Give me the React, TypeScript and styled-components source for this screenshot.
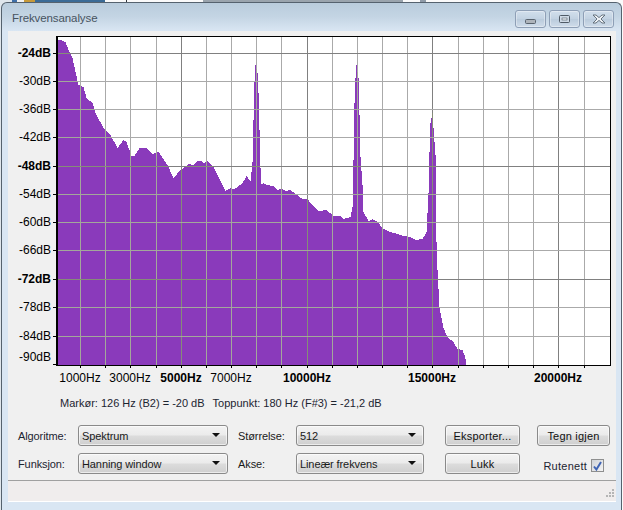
import styled, { createGlobalStyle } from "styled-components";

const GlobalStyle = createGlobalStyle`
  html, body {
    margin: 0;
    padding: 0;
    background: #fff;
  }
`;

// spectrum outline read off the picture, [x, y] in page pixels
const SPECTRUM: [number, number][] = [
  [57, 45], [58, 40], [60, 40], [65, 42], [68, 50], [72, 58], [75, 72], [78, 85], [83, 87],
  [86, 98], [92, 103], [95, 113], [103, 128], [110, 135], [117, 148], [123, 140], [126, 142],
  [131, 156], [134, 156], [139, 148], [146, 148], [152, 154], [158, 152], [167, 165], [173, 178],
  [180, 170], [188, 164], [193, 165], [197, 161], [201, 161], [203, 163], [207, 161], [213, 167],
  [218, 177], [225, 191], [230, 188], [234, 189], [242, 183], [246, 176], [250, 181], [252, 162],
  [253, 120], [254, 82], [255, 65], [257, 73], [258, 93], [259, 130], [260, 168], [261, 184],
  [263, 183], [267, 185], [273, 186], [277, 190], [281, 188], [285, 191], [290, 190], [295, 194],
  [302, 199], [307, 199], [310, 203], [318, 211], [326, 210], [333, 216], [340, 216], [343, 219],
  [350, 217], [352, 207], [353, 160], [354, 103], [355, 78], [356, 65], [358, 78], [359, 115],
  [360, 157], [362, 185], [363, 212], [368, 221], [372, 219], [377, 222], [382, 228], [390, 232],
  [397, 234], [403, 236], [410, 237], [415, 240], [422, 239], [426, 232], [428, 193], [429, 152],
  [430, 123], [432, 113], [433, 128], [435, 155], [436, 242], [437, 270], [439, 307], [441, 318],
  [443, 328], [447, 337], [453, 342], [457, 349], [462, 350], [464, 355], [466, 363],
];

const PLOT = { left: 56, right: 610, top: 36, bottom: 365 };

const V_LINES = [80, 105, 130, 156, 181, 206, 231, 256, 281, 307, 332, 357, 382, 407, 432, 458, 483, 508, 533, 558, 584];
const V_MAJOR = [181, 307, 432, 558];

const DB_ROWS = [
  { y: 53, label: "-24dB", major: true },
  { y: 81, label: "-30dB" },
  { y: 109, label: "-36dB" },
  { y: 137, label: "-42dB" },
  { y: 166, label: "-48dB", major: true },
  { y: 194, label: "-54dB" },
  { y: 222, label: "-60dB" },
  { y: 250, label: "-66dB" },
  { y: 279, label: "-72dB", major: true },
  { y: 307, label: "-78dB" },
  { y: 336, label: "-84dB" },
];

const HZ_LABELS = [
  { x: 80, label: "1000Hz" },
  { x: 130, label: "3000Hz" },
  { x: 181, label: "5000Hz", major: true },
  { x: 231, label: "7000Hz" },
  { x: 307, label: "10000Hz", major: true },
  { x: 432, label: "15000Hz", major: true },
  { x: 558, label: "20000Hz", major: true },
];

function spectrumPath() {
  let d = `M${PLOT.left + 1} ${PLOT.bottom}`;
  for (let i = 0; i < SPECTRUM.length - 1; i++) {
    const [x0, y0] = SPECTRUM[i];
    const [x1, y1] = SPECTRUM[i + 1];
    for (let x = x0; x < x1; x++) {
      const y = Math.round(y0 + ((y1 - y0) * (x - x0)) / (x1 - x0));
      d += `V${y}H${x + 1}`;
    }
  }
  return d + `V${PLOT.bottom}Z`;
}

const Page = styled.div`
  width: 623px;
  height: 510px;
  overflow: hidden;
  background: linear-gradient(
    90deg,
    #dfe6ec 0 12px,
    #3f6fa8 12px 17px,
    #f2f2f2 17px 24px,
    #c79a3a 24px 35px,
    #3b6b96 35px 105px,
    #fafafa 105px 126px,
    #30363c 126px 127px,
    #fafafa 127px 203px,
    #9aa4ad 203px 403px,
    #fafafa 403px 420px,
    #8f9ba8 420px 426px,
    #fafafa 426px 623px
  );
  padding-top: 2px;
  box-sizing: border-box;
  font-family: "Liberation Sans", Arial, sans-serif;
  font-size: 11px;
  letter-spacing: -0.1px;
  color: #1a1a1a;
`;

const Window = styled.div`
  width: 621px;
  height: 508px;
  margin-left: 1px;
  box-sizing: border-box;
  border: 1px solid #55626e;
  border-bottom: 0;
  border-radius: 6px 6px 0 0;
  background: linear-gradient(180deg, #b9ccdc 0, #c4d5e4 14px, #d9e6f3 28px);
  padding: 0 5px 8px 6px;
  display: flex;
  flex-direction: column;
`;

const TitleBar = styled.div`
  height: 28px;
  display: flex;
  align-items: center;
  justify-content: space-between;
  flex: none;
`;

const Title = styled.div`
  font-size: 11.5px;
  letter-spacing: -0.1px;
  color: #47535f;
  margin: 2px 0 0 4px;
`;

const Caption = styled.div`
  display: flex;
  gap: 3px;
  margin: 4px 2px 0 0;
`;

const CaptionButton = styled.div`
  width: 31px;
  height: 18px;
  box-sizing: border-box;
  border: 1px solid #8e9fb6;
  border-radius: 3px;
  background: linear-gradient(180deg, #d2dfec 0, #c2d2e2 50%, #bacbdc 51%, #cfdcea 100%);
  box-shadow: inset 0 0 0 1px rgba(255, 255, 255, 0.35);
  display: flex;
  align-items: center;
  justify-content: center;
`;

const Panel = styled.div`
  flex: 1;
  background: #f0f0f0;
  display: flex;
  flex-direction: column;
`;

const ChartSvg = styled.svg`
  display: block;
  flex: none;
`;

const AxisText = styled.text<{ $major?: boolean }>`
  font-family: "Liberation Sans", Arial, sans-serif;
  font-size: 12px;
  letter-spacing: 0;
  font-weight: ${(p) => (p.$major ? 700 : 400)};
  fill: #000;
`;

const InfoRow = styled.div`
  display: flex;
  gap: 8px;
  height: 18px;
  align-items: center;
  padding-left: 52px;
  margin-top: 9px;
  letter-spacing: 0;
  color: #1c2430;
`;

const Controls = styled.div`
  display: grid;
  grid-template-columns: 60px 150px 68px 128px 96px 90px;
  grid-auto-rows: 21px;
  row-gap: 7px;
  padding: 13px 0 0 10px;
  align-items: center;
`;

const FieldLabel = styled.div`
  color: #1c2430;
`;

const Dropdown = styled.div`
  position: relative;
  height: 21px;
  box-sizing: border-box;
  border: 1px solid #8a8a8a;
  border-radius: 3px;
  padding-left: 3px;
  line-height: 20px;
  background: linear-gradient(180deg, #f3f3f3 0, #ebebeb 48%, #dcdcdc 52%, #cfcfcf 100%);
  box-shadow: inset 0 0 0 1px rgba(255, 255, 255, 0.6);

  &::after {
    content: "";
    position: absolute;
    right: 7px;
    top: 7px;
    border-left: 4px solid transparent;
    border-right: 4px solid transparent;
    border-top: 4px solid #111;
  }
`;

const FieldGap = styled.div`
  padding-left: 10px;
`;

const Button = styled.div`
  height: 21px;
  box-sizing: border-box;
  border: 1px solid #8a8a8a;
  border-radius: 3px;
  text-align: center;
  line-height: 20px;
  letter-spacing: 0.2px;
  background: linear-gradient(180deg, #f3f3f3 0, #ebebeb 48%, #dcdcdc 52%, #cfcfcf 100%);
  box-shadow: inset 0 0 0 1px rgba(255, 255, 255, 0.6);
  color: #111;
`;

const ButtonCell = styled.div<{ $indent: number }>`
  padding-left: ${(p) => p.$indent}px;
`;

const GridToggle = styled.div`
  display: flex;
  align-items: center;
  justify-content: flex-end;
  gap: 4px;
  margin-top: 4px;
  margin-right: 6px;
  white-space: nowrap;
  letter-spacing: 0.25px;
  color: #1c2430;
`;

const CheckBox = styled.div`
  width: 13px;
  height: 13px;
  flex: none;
  box-sizing: border-box;
  border: 1px solid #8e8f8f;
  background: linear-gradient(135deg, #cfd3d8, #f4f4f4);
  display: flex;
  align-items: center;
  justify-content: center;
`;

const StatusBar = styled.div`
  margin-top: 6px;
  flex: 1;
  box-sizing: border-box;
  border-top: 1px solid #a0a0a0;
  border-bottom: 1px solid #fff;
  background: #f0eded;
  display: flex;
  justify-content: flex-end;
  align-items: flex-end;
`;

export default function App() {
  const path = spectrumPath();
  const vMinor = V_LINES.filter((x) => !V_MAJOR.includes(x));

  const gridLines = (light: string, dark: string) => (
    <g shapeRendering="crispEdges">
      {vMinor.map((x) => (
        <line key={x} x1={x + 0.5} x2={x + 0.5} y1={PLOT.top} y2={PLOT.bottom} stroke={light} />
      ))}
      {V_MAJOR.map((x) => (
        <line key={x} x1={x + 0.5} x2={x + 0.5} y1={PLOT.top} y2={PLOT.bottom} stroke={dark} />
      ))}
      {DB_ROWS.map((r) => (
        <line key={r.y} x1={PLOT.left} x2={PLOT.right} y1={r.y + 0.5} y2={r.y + 0.5} stroke={r.major ? dark : light} />
      ))}
    </g>
  );

  return (
    <>
      <GlobalStyle />
      <Page>
        <Window>
          <TitleBar>
            <Title>Frekvensanalyse</Title>
            <Caption>
              <CaptionButton>
                <svg width="11" height="5" viewBox="0 0 11 5" style={{ marginTop: 5 }}>
                  <rect x="0.5" y="0.5" width="10" height="4" rx="1" fill="#aeb4bb" stroke="#59636e" />
                </svg>
              </CaptionButton>
              <CaptionButton>
                <svg width="11" height="8" viewBox="0 0 11 8">
                  <rect x="0.5" y="0.5" width="10" height="7" rx="1" fill="#cfdae6" stroke="#4f5a66" />
                  <rect x="3" y="3" width="5" height="2" fill="#f1f5f9" stroke="#4f5a66" strokeWidth="0.6" />
                </svg>
              </CaptionButton>
              <CaptionButton>
                <svg width="14" height="10" viewBox="0 0 14 10">
                  <path d="M1 1h3l3 2.6L10 1h3L9 5l4 4h-3L7 6.4 4 9H1l4-4z" fill="#eef2f6" stroke="#5a6673" strokeWidth="0.9" />
                </svg>
              </CaptionButton>
            </Caption>
          </TitleBar>
          <Panel>
            <ChartSvg width="608" height="354" viewBox="8 31 608 354">
              <rect x={PLOT.left} y={PLOT.top} width={PLOT.right - PLOT.left} height={PLOT.bottom - PLOT.top} fill="#fff" />
              {gridLines("#aaaaaa", "#808080")}
              <clipPath id="spectrum-clip">
                <path d={path} />
              </clipPath>
              <path d={path} fill="#8a3abb" shapeRendering="crispEdges" />
              <g clipPath="url(#spectrum-clip)">{gridLines("#a3a89a", "#868c78")}</g>
              <rect
                x={PLOT.left + 0.5}
                y={PLOT.top + 0.5}
                width={PLOT.right - PLOT.left}
                height={PLOT.bottom - PLOT.top}
                fill="none"
                stroke="#000"
                strokeWidth="1"
                shapeRendering="crispEdges"
              />
              <line x1={PLOT.left + 1} x2={PLOT.left + 1} y1={PLOT.top} y2={PLOT.bottom} stroke="#000" shapeRendering="crispEdges" />
              <line x1={PLOT.left} x2={PLOT.right} y1={PLOT.bottom} y2={PLOT.bottom} stroke="#000" shapeRendering="crispEdges" />
              {[...DB_ROWS.map((r) => r.y), 364].map((y) => (
                <line key={y} x1={53} x2={56} y1={y + 0.5} y2={y + 0.5} stroke="#000" shapeRendering="crispEdges" />
              ))}
              {V_LINES.map((x) => (
                <line key={x} x1={x + 0.5} x2={x + 0.5} y1={PLOT.bottom} y2={PLOT.bottom + 3} stroke="#000" shapeRendering="crispEdges" />
              ))}
              {DB_ROWS.map((r) => (
                <AxisText key={r.y} x={51} y={r.y + 4} textAnchor="end" $major={r.major}>
                  {r.label}
                </AxisText>
              ))}
              <AxisText x={51} y={361} textAnchor="end">
                -90dB
              </AxisText>
              {HZ_LABELS.map((l) => (
                <AxisText key={l.x} x={l.x} y={382} textAnchor="middle" $major={l.major}>
                  {l.label}
                </AxisText>
              ))}
            </ChartSvg>
            <InfoRow>
              <span>Markør: 126 Hz (B2) = -20 dB</span>
              <span>Toppunkt: 180 Hz (F#3) = -21,2 dB</span>
            </InfoRow>
            <Controls>
              <FieldLabel>Algoritme:</FieldLabel>
              <Dropdown>Spektrum</Dropdown>
              <FieldGap>Størrelse:</FieldGap>
              <Dropdown>512</Dropdown>
              <ButtonCell $indent={21}>
                <Button>Eksporter...</Button>
              </ButtonCell>
              <ButtonCell $indent={17}>
                <Button>Tegn igjen</Button>
              </ButtonCell>
              <FieldLabel>Funksjon:</FieldLabel>
              <Dropdown>Hanning window</Dropdown>
              <FieldGap>Akse:</FieldGap>
              <Dropdown>Lineær frekvens</Dropdown>
              <ButtonCell $indent={21}>
                <Button>Lukk</Button>
              </ButtonCell>
              <GridToggle>
                Rutenett
                <CheckBox>
                  <svg width="9" height="10" viewBox="0 0 9 10">
                    <path d="M1 5.5l2.4 3L8 1" fill="none" stroke="#3f64b4" strokeWidth="2" />
                  </svg>
                </CheckBox>
              </GridToggle>
            </Controls>
            <StatusBar>
              <svg width="11" height="11" viewBox="0 0 11 11" style={{ marginRight: 1, marginBottom: 1 }}>
                <g fill="#b5b5b5">
                  <rect x="8" y="0" width="2" height="2" />
                  <rect x="5" y="3" width="2" height="2" />
                  <rect x="8" y="3" width="2" height="2" />
                  <rect x="2" y="6" width="2" height="2" />
                  <rect x="5" y="6" width="2" height="2" />
                  <rect x="8" y="6" width="2" height="2" />
                </g>
              </svg>
            </StatusBar>
          </Panel>
        </Window>
      </Page>
    </>
  );
}
